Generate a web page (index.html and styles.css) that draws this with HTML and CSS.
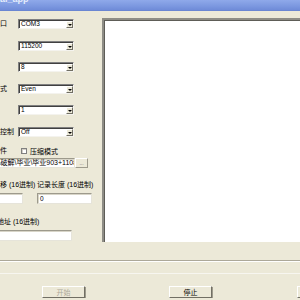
FILE: index.html
```html
<!DOCTYPE html>
<html lang="zh-CN">
<head>
    <meta charset="UTF-8">
    <title>al_app</title>
    <link rel="stylesheet" href="styles.css">
</head>
<body>
    <div class="titlebar"><span class="title">al_app</span></div>

    <div class="main">
        <!-- Settings column -->
        <div class="form">
            <div class="row"><span class="lbl">串口</span><div class="combo"><span>COM3</span><i class="drop"></i></div></div>
            <div class="row"><span class="lbl"></span><div class="combo"><span>115200</span><i class="drop"></i></div></div>
            <div class="row"><span class="lbl"></span><div class="combo"><span>8</span><i class="drop"></i></div></div>
            <div class="row"><span class="lbl">方式</span><div class="combo"><span>Even</span><i class="drop"></i></div></div>
            <div class="row"><span class="lbl"></span><div class="combo"><span>1</span><i class="drop"></i></div></div>
            <div class="row"><span class="lbl">流控制</span><div class="combo"><span>Off</span><i class="drop"></i></div></div>

            <div class="row check-row">
                <span class="lbl wide">文件</span>
                <span class="checkbox"></span>
                <span class="check-text">压缩模式</span>
            </div>

            <div class="row path-row">
                <div class="textbox path">D:\破解\毕业\毕业903+1108</div>
                <button class="browse">...</button>
            </div>

            <div class="row caption-row">
                <span class="cap first">偏移 (16进制)</span>
                <span class="cap">记录长度 (16进制)</span>
            </div>
            <div class="row box-row">
                <div class="textbox offset"></div>
                <div class="textbox length">0</div>
            </div>

            <div class="row caption-row addr-cap">
                <span class="cap addr">起始地址 (16进制)</span>
            </div>
            <div class="row box-row">
                <div class="textbox address"></div>
            </div>
        </div>

        <!-- Receive area -->
        <div class="log"></div>
    </div>

    <div class="footer">
        <div class="sep"></div>
        <div class="sep light"></div>
        <div class="buttons">
            <button class="btn start" disabled>开始</button>
            <button class="btn stop">停止</button>
            <button class="btn quit">退出</button>
        </div>
    </div>
</body>
</html>
```

FILE: styles.css
```css
* {
    margin: 0;
    padding: 0;
    box-sizing: border-box;
}

body {
    width: 300px;
    height: 300px;
    overflow: hidden;
    background: #ECE9D8;
    font-family: 'Liberation Sans', 'Noto Sans CJK SC', sans-serif;
    font-size: 7px;
    color: #000;
}

.titlebar {
    height: 11px;
    background: linear-gradient(180deg, #8FA9EA 0%, #7C98E0 60%, #6F8BD8 100%);
    border-bottom: 1px solid #6A86D2;
    overflow: hidden;
}

.title {
    display: block;
    margin-top: -6px;
    color: #E4ECFB;
    font-weight: bold;
    font-size: 9px;
    line-height: 10px;
}

.main {
    display: flex;
    height: 231px;
}

.form {
    width: 102px;
    flex: none;
    padding-top: 8px;
    display: flex;
    flex-direction: column;
    gap: 11.6px;
}

.row {
    display: flex;
    align-items: center;
    height: 10px;
    white-space: nowrap;
}

.lbl {
    width: 25px;
    margin-left: -7px;
    flex: none;
    font-size: 7px;
    line-height: 10px;
}

.lbl.wide {
    width: 28px;
}

.combo {
    position: relative;
    width: 56px;
    height: 10px;
    background: #fff;
    border: 1px solid;
    border-color: #808080 #F4F3EE #F4F3EE #808080;
    box-shadow: inset 1px 1px 0 #404040;
    font-size: 6.5px;
    line-height: 8px;
    padding-left: 2px;
}

.drop {
    position: absolute;
    right: 0;
    top: 1px;
    width: 7px;
    height: 7px;
    background: #ECE9D8;
    border: 1px solid;
    border-color: #fff #716F64 #716F64 #fff;
}

.drop::after {
    content: '';
    position: absolute;
    left: 1px;
    top: 2px;
    border-left: 2px solid transparent;
    border-right: 2px solid transparent;
    border-top: 2px solid #000;
}

.check-row {
    height: 7px;
    margin-top: -0.6px;
}

.checkbox {
    width: 6px;
    height: 6px;
    background: #fff;
    border: 1px solid #808080;
    box-shadow: inset 1px 1px 0 #D4D0C8;
}

.check-text {
    margin-left: 3px;
    font-size: 7px;
}

.path-row {
    margin-top: -8.6px;
}

.textbox {
    height: 11px;
    background: #fff;
    border: 1px solid;
    border-color: #9D9A8C #E6E4DA #E6E4DA #9D9A8C;
    box-shadow: inset 1px 1px 0 #D8D5C8;
    overflow: hidden;
    white-space: nowrap;
    font-size: 6.5px;
    line-height: 9px;
    padding-left: 2px;
}

.path {
    width: 78px;
    height: 10px;
    margin-left: -3px;
    padding-left: 0;
    text-indent: -6.5px;
    font-size: 7px;
    line-height: 8px;
}

.browse {
    width: 13px;
    height: 10px;
    flex: none;
    background: #ECE9D8;
    border: 1px solid;
    border-color: #fff #9D9A8C #9D9A8C #fff;
    font-family: inherit;
    font-size: 5px;
    line-height: 6px;
    color: #555;
}

.caption-row {
    height: 7px;
    margin-top: 1.4px;
}

.cap {
    font-size: 7px;
    line-height: 7px;
}

.cap.first {
    width: 44px;
    margin-left: -7px;
}

.box-row {
    height: 11px;
    margin-top: -6.6px;
}

.offset {
    width: 33px;
    margin-left: -10px;
}

.length {
    width: 55px;
    margin-left: 14px;
}

.addr-cap {
    margin-top: 2.4px;
}

.cap.addr {
    margin-left: -17px;
}

.address {
    width: 82px;
    margin-left: -10px;
}

.log {
    flex: 1;
    margin-top: 7px;
    height: 224px;
    background: #fff;
    border-top: 2px solid #8E8D86;
    border-left: 2px solid #8E8D86;
    box-shadow: inset 1px 1px 0 #5E5D57;
}

.footer {
    padding-top: 18px;
}

.sep {
    height: 2px;
    border-top: 1px solid #ACA899;
    border-bottom: 1px solid #fff;
}

.sep.light {
    margin-top: 11px;
    border-top-color: #F7F6F0;
    border-bottom: none;
}

.buttons {
    display: flex;
    margin-top: 11px;
    overflow: hidden;
}

.btn {
    flex: none;
    height: 12px;
    width: 43px;
    background: #ECE9D8;
    border: 1px solid;
    border-color: #fff #716F64 #716F64 #fff;
    box-shadow: 1px 1px 0 #9D9A8C;
    font-family: inherit;
    font-size: 7px;
    line-height: 9px;
    color: #000;
}

.btn.start {
    margin-left: 42px;
    color: #ACA899;
}

.btn.stop {
    margin-left: 84px;
}

.btn.quit {
    margin-left: 85px;
}
```
